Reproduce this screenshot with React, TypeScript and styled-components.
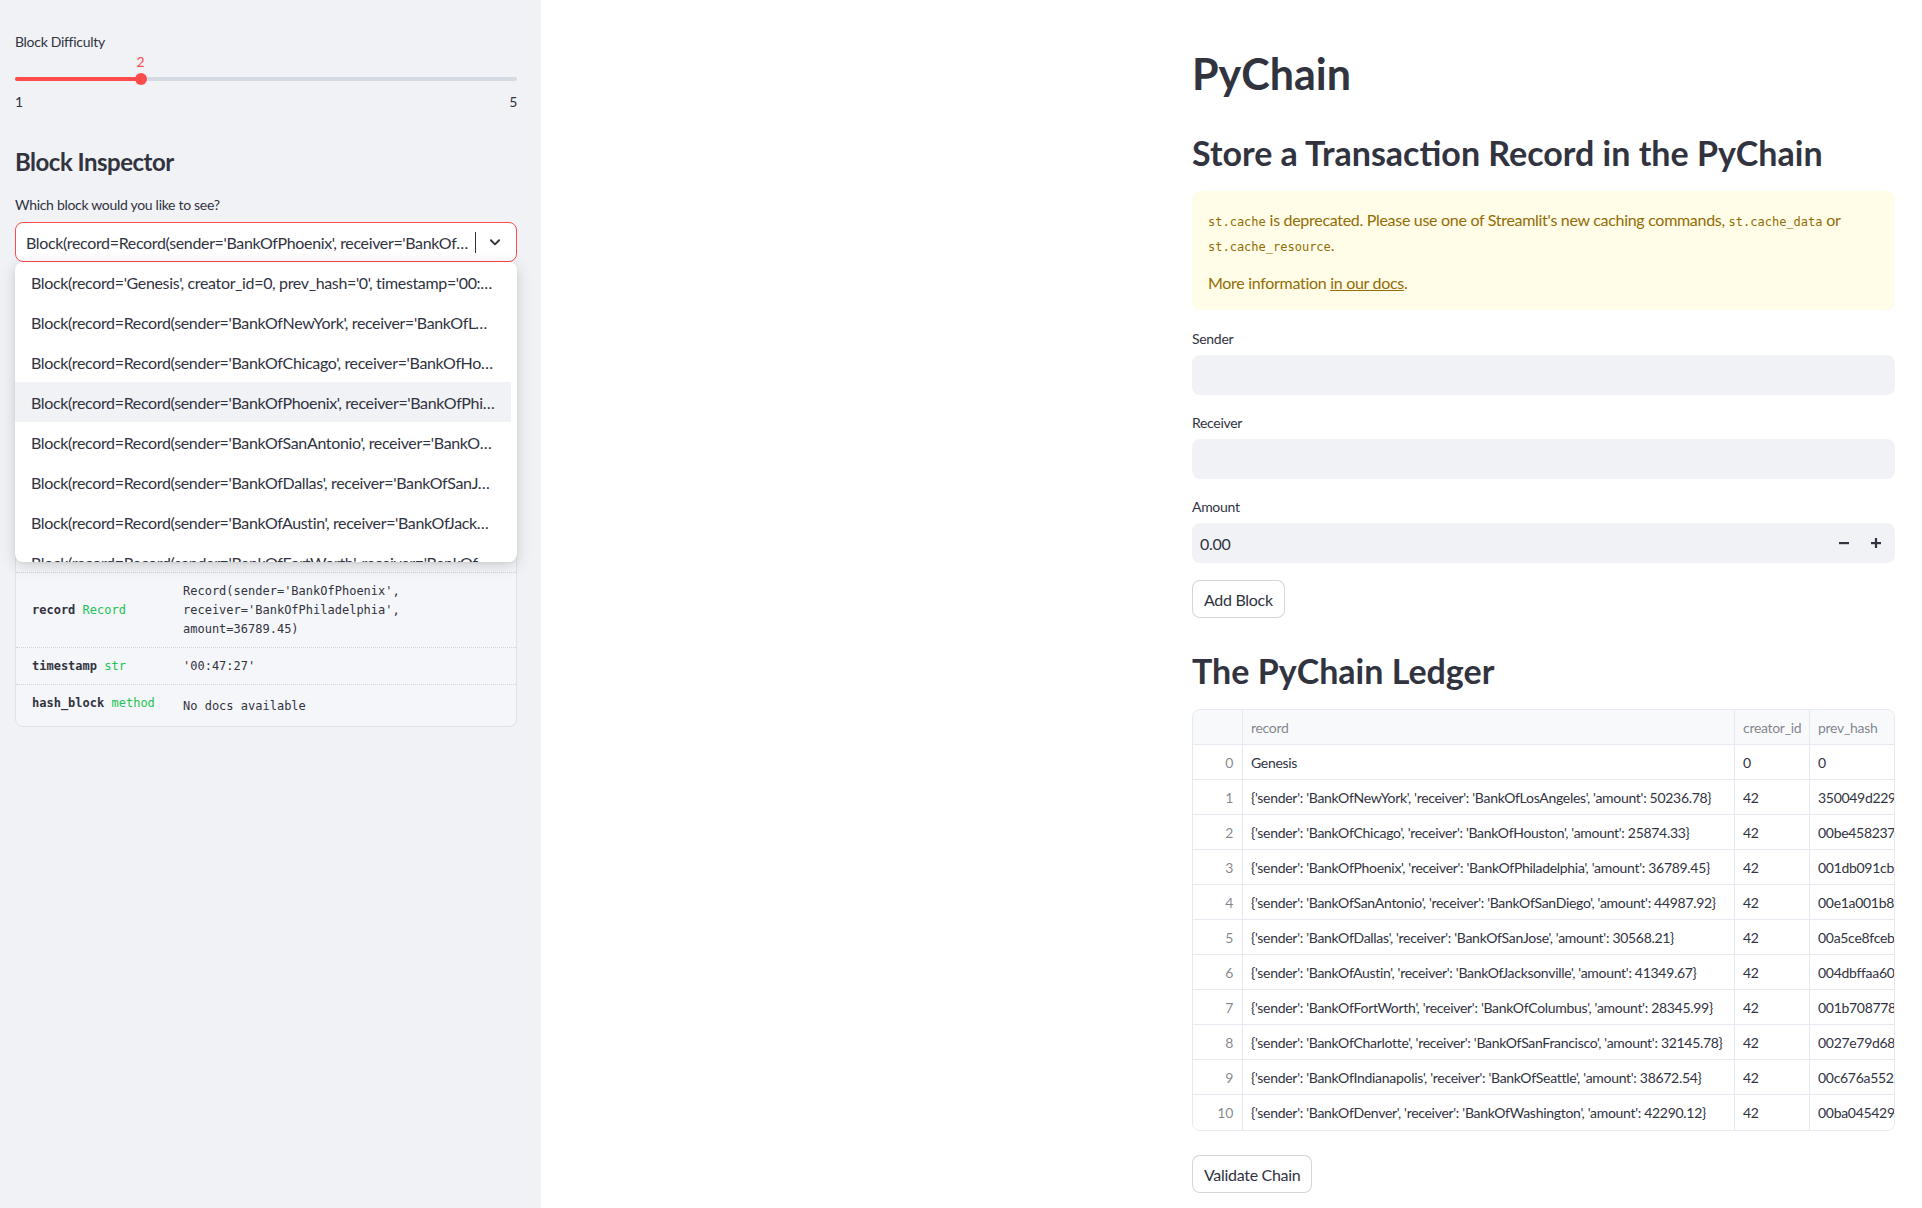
import React from "react";
import styled, { createGlobalStyle } from "styled-components";

const GlobalStyle = createGlobalStyle`
  html, body { margin: 0; padding: 0; background: #ffffff; }
  body {
    font-family: Lato, "Noto Sans", sans-serif;
    color: #31333f;
    letter-spacing: -0.3px;
    -webkit-font-smoothing: antialiased;
  }
  * { box-sizing: border-box; }
`;

const Page = styled.div`
  display: flex;
  width: 1922px;
  min-height: 1208px;
`;

/* ---------------- Sidebar ---------------- */

const Sidebar = styled.aside`
  flex: 0 0 541px;
  width: 541px;
  background: #f0f2f6;
  padding: 32px 24px 0 15px;
  display: flex;
  flex-direction: column;
`;

const WidgetLabel = styled.label<{ $mb?: number }>`
  display: block;
  font-size: 14px;
  line-height: 20px;
  color: #31333f;
  margin-bottom: ${(p) => p.$mb ?? 0}px;
`;

const SliderBlock = styled.div`
  display: flex;
  flex-direction: column;
`;

const SliderValueRow = styled.div`
  position: relative;
  height: 20px;
`;

const SliderValue = styled.span`
  position: absolute;
  top: 0;
  transform: translateX(-50%);
  font-size: 14px;
  line-height: 20px;
  color: #ff4b4b;
`;

const SliderTrackArea = styled.div`
  position: relative;
  height: 14px;
  display: flex;
  align-items: center;
`;

const SliderTrack = styled.div`
  position: relative;
  width: 100%;
  height: 4px;
  border-radius: 2px;
  background: #d5d9e2;
`;

const SliderFill = styled.div`
  height: 100%;
  border-radius: 2px;
  background: #ff4b4b;
`;

const SliderThumb = styled.div`
  position: absolute;
  top: 50%;
  width: 12px;
  height: 12px;
  border-radius: 50%;
  background: #ff4b4b;
  transform: translate(-50%, -50%);
`;

const SliderTicks = styled.div`
  display: flex;
  justify-content: space-between;
  margin-top: 6px;
  font-size: 14px;
  line-height: 20px;
  color: #31333f;
`;

const SideHeading = styled.h2`
  margin: 32px 0 15px;
  font-size: 24px;
  line-height: 36px;
  font-weight: 700;
  letter-spacing: -0.5px;
  color: #31333f;
`;

const SelectWrap = styled.div`
  position: relative;
`;

const SelectBox = styled.div`
  height: 40px;
  display: flex;
  align-items: center;
  background: #ffffff;
  border: 1px solid #ff4b4b;
  border-radius: 8px;
  padding: 0 14px 0 10px;
  font-size: 16px;
  letter-spacing: -0.35px;
  color: #31333f;
`;

const SelectValue = styled.span`
  max-width: 447px;
  white-space: nowrap;
  overflow: hidden;
  text-overflow: ellipsis;
`;

const Caret = styled.span`
  width: 1px;
  height: 21px;
  margin-left: 2px;
  background: #31333f;
`;

const SelectChevron = styled.span`
  margin-left: auto;
  display: flex;
  align-items: center;
`;

const Menu = styled.ul`
  position: absolute;
  z-index: 10;
  top: 40px;
  left: 0;
  right: 0;
  height: 300px;
  margin: 0;
  padding: 0;
  list-style: none;
  overflow: hidden;
  background: #ffffff;
  border-radius: 8px;
  box-shadow: 0 4px 16px rgba(0, 0, 0, 0.16), 0 1px 3px rgba(0, 0, 0, 0.06);
`;

const MenuItem = styled.li<{ $active?: boolean }>`
  height: 40px;
  margin-right: 6px;
  padding: 0 16px 0 16px;
  display: flex;
  align-items: center;
  font-size: 16px;
  letter-spacing: -0.35px;
  color: #31333f;
  background: ${(p) => (p.$active ? "#f0f2f6" : "transparent")};
`;

const MenuText = styled.span`
  white-space: nowrap;
  overflow: hidden;
  text-overflow: ellipsis;
`;

const HelpCard = styled.div`
  margin-top: 16px;
  background: #f5f6f9;
  border: 1px solid #dfe2e8;
  border-radius: 8px;
  padding-bottom: 5px;
  font-family: "DejaVu Sans Mono", "Liberation Mono", monospace;
  font-size: 12px;
  letter-spacing: 0;
  color: #31333f;
`;

const HelpIntro = styled.div`
  height: 293px;
`;

const HelpRow = styled.div`
  display: grid;
  grid-template-columns: 151px 1fr;
  align-items: center;
  padding: 9px 16px 8px;
  border-top: 1px dotted #cfd2da;
  line-height: 19px;
`;

const HelpName = styled.span`
  font-weight: 700;
  white-space: nowrap;
`;

const HelpType = styled.span`
  font-weight: 400;
  color: #21c354;
`;

const HelpValue = styled.span<{ $shift?: number }>`
  white-space: pre-wrap;
  position: relative;
  top: ${(p) => p.$shift ?? 0}px;
`;

/* ---------------- Main ---------------- */

const Main = styled.main`
  flex: 1;
  display: flex;
  justify-content: flex-end;
  padding: 48px 27px 40px 0;
`;

const Content = styled.div`
  width: 703px;
  display: flex;
  flex-direction: column;
`;

const Title = styled.h1`
  margin: 0;
  font-size: 43px;
  line-height: 52px;
  font-weight: 700;
  letter-spacing: 0;
  color: #31333f;
`;

const Heading = styled.h2<{ $mt: number }>`
  margin: ${(p) => p.$mt}px 0 0;
  font-size: 34px;
  line-height: 44px;
  font-weight: 700;
  color: #31333f;
  letter-spacing: 0;
`;

const Alert = styled.div`
  margin-top: 16px;
  padding: 16px 16px 15px;
  background: #fffce7;
  border-radius: 8px;
  color: #926c05;
  font-size: 16px;
  line-height: 25px;
`;

const AlertPara = styled.p<{ $mb?: number }>`
  margin: 0 0 ${(p) => p.$mb ?? 0}px;
`;

const Code = styled.code`
  font-family: "DejaVu Sans Mono", "Liberation Mono", monospace;
  font-size: 12px;
  line-height: 1;
  letter-spacing: 0;
  color: inherit;
`;

const AlertLink = styled.a`
  color: inherit;
  text-decoration: underline;
`;

const Form = styled.div`
  margin-top: 19px;
  display: flex;
  flex-direction: column;
  gap: 18px;
`;

const Field = styled.div`
  display: flex;
  flex-direction: column;
`;

const Input = styled.div`
  height: 40px;
  border-radius: 8px;
  background: #f0f2f6;
  display: flex;
  align-items: center;
  padding: 0 8px 0 8px;
  font-size: 16px;
  color: #31333f;
`;

const StepButtons = styled.div`
  margin-left: auto;
  display: flex;
  align-items: center;
  gap: 18px;
  padding-right: 4px;
`;

const StepButton = styled.span`
  display: flex;
  width: 14px;
  height: 14px;
  align-items: center;
  justify-content: center;
`;

const Button = styled.button<{ $mt: number }>`
  align-self: flex-start;
  margin-top: ${(p) => p.$mt}px;
  height: 38px;
  padding: 0 11px;
  background: #ffffff;
  border: 1px solid rgba(49, 51, 63, 0.2);
  border-radius: 8px;
  font-family: inherit;
  font-size: 16px;
  letter-spacing: -0.3px;
  color: #31333f;
`;

const TableWrap = styled.div`
  margin-top: 16px;
  width: 703px;
  border: 1px solid #e6e9ef;
  border-radius: 8px;
  overflow: hidden;
`;

const TableGrid = styled.div`
  display: grid;
  grid-template-columns: 50px 492px 75px 340px;
`;

const Cell = styled.div<{ $head?: boolean; $index?: boolean; $last?: boolean }>`
  height: 35px;
  display: flex;
  align-items: center;
  justify-content: ${(p) => (p.$index ? "flex-end" : "flex-start")};
  padding: ${(p) => (p.$index ? "0 9px 0 0" : "0 8px")};
  border-right: 1px solid #e6e9ef;
  border-bottom: ${(p) => (p.$last ? "none" : "1px solid #e6e9ef")};
  background: ${(p) => (p.$head ? "#f8f9fb" : "#ffffff")};
  color: ${(p) =>
    p.$head || p.$index ? "rgba(49, 51, 63, 0.6)" : "#31333f"};
  font-size: 14px;
  letter-spacing: -0.3px;
  white-space: nowrap;
  overflow: hidden;
`;

/* ---------------- Data ---------------- */

const menuItems = [
  "Block(record='Genesis', creator_id=0, prev_hash='0', timestamp='00:47:05', nonce=0)",
  "Block(record=Record(sender='BankOfNewYork', receiver='BankOfLosAngeles', amount=50236.78), creator_id=42)",
  "Block(record=Record(sender='BankOfChicago', receiver='BankOfHouston', amount=25874.33), creator_id=42)",
  "Block(record=Record(sender='BankOfPhoenix', receiver='BankOfPhiladelphia', amount=36789.45), creator_id=42)",
  "Block(record=Record(sender='BankOfSanAntonio', receiver='BankOfSanDiego', amount=44987.92), creator_id=42)",
  "Block(record=Record(sender='BankOfDallas', receiver='BankOfSanJose', amount=30568.21), creator_id=42)",
  "Block(record=Record(sender='BankOfAustin', receiver='BankOfJacksonville', amount=41349.67), creator_id=42)",
  "Block(record=Record(sender='BankOfFortWorth', receiver='BankOfColumbus', amount=28345.99), creator_id=42)",
];

const ledger: [string, string, string][] = [
  ["Genesis", "0", "0"],
  ["{'sender': 'BankOfNewYork', 'receiver': 'BankOfLosAngeles', 'amount': 50236.78}", "42", "350049d229b4e7c1a8f03d2b6e"],
  ["{'sender': 'BankOfChicago', 'receiver': 'BankOfHouston', 'amount': 25874.33}", "42", "00be458237d91c4ab2e6f071d3"],
  ["{'sender': 'BankOfPhoenix', 'receiver': 'BankOfPhiladelphia', 'amount': 36789.45}", "42", "001db091cb6e24f8a03c9d57b1"],
  ["{'sender': 'BankOfSanAntonio', 'receiver': 'BankOfSanDiego', 'amount': 44987.92}", "42", "00e1a001b87c3d2f95e4a61b08"],
  ["{'sender': 'BankOfDallas', 'receiver': 'BankOfSanJose', 'amount': 30568.21}", "42", "00a5ce8fceb17d30a29c4e86f5"],
  ["{'sender': 'BankOfAustin', 'receiver': 'BankOfJacksonville', 'amount': 41349.67}", "42", "004dbffaa6072e9c18b5d43af0"],
  ["{'sender': 'BankOfFortWorth', 'receiver': 'BankOfColumbus', 'amount': 28345.99}", "42", "001b70877835af2c64d19e0b7c"],
  ["{'sender': 'BankOfCharlotte', 'receiver': 'BankOfSanFrancisco', 'amount': 32145.78}", "42", "0027e79d6824b1f03ac59e7d26"],
  ["{'sender': 'BankOfIndianapolis', 'receiver': 'BankOfSeattle', 'amount': 38672.54}", "42", "00c676a55293e8d1b4f2a07c95"],
  ["{'sender': 'BankOfDenver', 'receiver': 'BankOfWashington', 'amount': 42290.12}", "42", "00ba045429d8f3e61c2b7a4059"],
];

/* ---------------- Icons ---------------- */

const ChevronDown = () => (
  <svg width="14" height="14" viewBox="0 0 24 24" fill="none" stroke="#31333f" strokeWidth="3.2" strokeLinecap="round" strokeLinejoin="round">
    <path d="M5 9l7 7 7-7" />
  </svg>
);

const MinusIcon = () => (
  <svg width="12" height="12" viewBox="0 0 12 12">
    <rect x="1" y="5" width="10" height="2.2" fill="#31333f" />
  </svg>
);

const PlusIcon = () => (
  <svg width="12" height="12" viewBox="0 0 12 12">
    <rect x="1" y="5" width="10" height="2.2" fill="#31333f" />
    <rect x="4.9" y="1" width="2.2" height="10" fill="#31333f" />
  </svg>
);

/* ---------------- App ---------------- */

export default function App() {
  const min = 1;
  const max = 5;
  const value = 2;
  const pct = ((value - min) / (max - min)) * 100;

  return (
    <>
      <GlobalStyle />
      <Page>
        <Sidebar>
          <WidgetLabel>Block Difficulty</WidgetLabel>
          <SliderBlock>
            <SliderValueRow>
              <SliderValue style={{ left: `${pct}%` }}>{value}</SliderValue>
            </SliderValueRow>
            <SliderTrackArea>
              <SliderTrack>
                <SliderFill style={{ width: `${pct}%` }} />
                <SliderThumb style={{ left: `${pct}%` }} />
              </SliderTrack>
            </SliderTrackArea>
            <SliderTicks>
              <span>{min}</span>
              <span>{max}</span>
            </SliderTicks>
          </SliderBlock>

          <SideHeading>Block Inspector</SideHeading>
          <WidgetLabel $mb={7}>Which block would you like to see?</WidgetLabel>
          <SelectWrap>
            <SelectBox>
              <SelectValue>
                Block(record=Record(sender='BankOfPhoenix', receiver='BankOfPhiladelphia', amount=36789.45), creator_id=42)
              </SelectValue>
              <Caret />
              <SelectChevron>
                <ChevronDown />
              </SelectChevron>
            </SelectBox>
            <Menu>
              {menuItems.map((m, i) => (
                <MenuItem key={i} $active={i === 3}>
                  <MenuText>{m}</MenuText>
                </MenuItem>
              ))}
            </Menu>
          </SelectWrap>

          <HelpCard>
            <HelpIntro />
            <HelpRow>
              <HelpName>
                record <HelpType>Record</HelpType>
              </HelpName>
              <HelpValue>
                {"Record(sender='BankOfPhoenix',\nreceiver='BankOfPhiladelphia',\namount=36789.45)"}
              </HelpValue>
            </HelpRow>
            <HelpRow>
              <HelpName>
                timestamp <HelpType>str</HelpType>
              </HelpName>
              <HelpValue>'00:47:27'</HelpValue>
            </HelpRow>
            <HelpRow>
              <HelpName>
                hash_block <HelpType>method</HelpType>
              </HelpName>
              <HelpValue $shift={3}>No docs available</HelpValue>
            </HelpRow>
          </HelpCard>
        </Sidebar>

        <Main>
          <Content>
            <Title>PyChain</Title>
            <Heading $mt={31}>Store a Transaction Record in the PyChain</Heading>
            <Alert>
              <AlertPara $mb={13}>
                <Code>st.cache</Code> is deprecated. Please use one of Streamlit's new caching commands,{" "}
                <Code>st.cache_data</Code> or <Code>st.cache_resource</Code>.
              </AlertPara>
              <AlertPara>
                More information <AlertLink href="#">in our docs</AlertLink>.
              </AlertPara>
            </Alert>

            <Form>
              <Field>
                <WidgetLabel $mb={6}>Sender</WidgetLabel>
                <Input />
              </Field>
              <Field>
                <WidgetLabel $mb={6}>Receiver</WidgetLabel>
                <Input />
              </Field>
              <Field>
                <WidgetLabel $mb={6}>Amount</WidgetLabel>
                <Input>
                  0.00
                  <StepButtons>
                    <StepButton>
                      <MinusIcon />
                    </StepButton>
                    <StepButton>
                      <PlusIcon />
                    </StepButton>
                  </StepButtons>
                </Input>
              </Field>
            </Form>
            <Button $mt={17}>Add Block</Button>

            <Heading $mt={31}>The PyChain Ledger</Heading>
            <TableWrap>
              <TableGrid>
                <Cell $head />
                <Cell $head>record</Cell>
                <Cell $head>creator_id</Cell>
                <Cell $head>prev_hash</Cell>
                {ledger.map((row, i) => {
                  const last = i === ledger.length - 1;
                  return (
                    <React.Fragment key={i}>
                      <Cell $index $last={last}>{i}</Cell>
                      <Cell $last={last}>{row[0]}</Cell>
                      <Cell $last={last}>{row[1]}</Cell>
                      <Cell $last={last}>{row[2]}</Cell>
                    </React.Fragment>
                  );
                })}
              </TableGrid>
            </TableWrap>
            <Button $mt={24}>Validate Chain</Button>
          </Content>
        </Main>
      </Page>
    </>
  );
}
